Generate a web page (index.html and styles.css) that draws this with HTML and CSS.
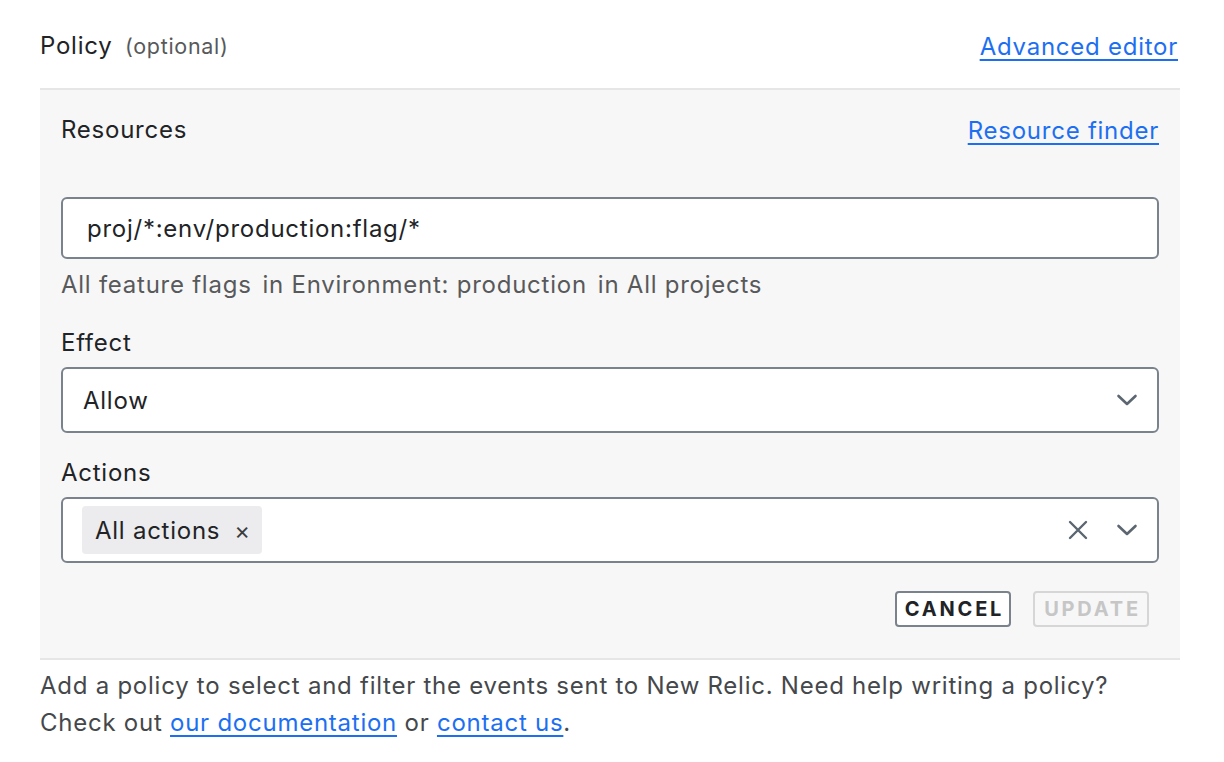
FILE: index.html
```html
<!DOCTYPE html>
<html lang="en">
<head>
<meta charset="utf-8">
<title>Policy</title>
<link rel="stylesheet" href="styles.css">
</head>
<body>
<div class="wrap">
  <div class="head">
    <div class="title">Policy <span class="opt">(optional)</span></div>
    <a class="link" href="#">Advanced editor</a>
  </div>
  <div class="panel">
    <div class="row">
      <span class="label">Resources</span>
      <a class="link" href="#">Resource finder</a>
    </div>
    <div class="input">proj/*:env/production:flag/*</div>
    <div class="hint"><span>All feature flags</span><span>in Environment: production</span><span>in All projects</span></div>
    <div class="label field-label">Effect</div>
    <div class="select">
      <span class="val">Allow</span>
      <svg class="chev" width="22" height="14" viewBox="0 0 22 14"><path d="M2.5 3 L11 11 L19.5 3" fill="none" stroke="#5b6670" stroke-width="2.6" stroke-linecap="round" stroke-linejoin="round"/></svg>
    </div>
    <div class="label field-label">Actions</div>
    <div class="select multi">
      <span class="chip">All actions <span class="chip-x">×</span></span>
      <span class="spacer"></span>
      <svg class="clear" width="20" height="20" viewBox="0 0 20 20"><path d="M2 2 L18 18 M18 2 L2 18" fill="none" stroke="#5b6670" stroke-width="2.4" stroke-linecap="round"/></svg>
      <svg class="chev" width="22" height="14" viewBox="0 0 22 14"><path d="M2.5 3 L11 11 L19.5 3" fill="none" stroke="#5b6670" stroke-width="2.6" stroke-linecap="round" stroke-linejoin="round"/></svg>
    </div>
    <div class="actions">
      <button class="btn">CANCEL</button>
      <button class="btn disabled">UPDATE</button>
    </div>
  </div>
  <p class="desc">Add a policy to select and filter the events sent to New Relic. Need help writing a policy?<br>Check out <a class="link" href="#">our documentation</a> or <a class="link" href="#">contact us</a>.</p>
</div>
</body>
</html>
```

FILE: styles.css
```css
* { box-sizing: border-box; }
html, body { margin: 0; padding: 0; background: #ffffff; }
body {
  font-family: Inter, "Noto Sans", "Liberation Sans", sans-serif;
  color: #212326;
  font-size: 24px;
  letter-spacing: 0.75px;
}
.wrap {
  width: 1140px;
  margin-left: 40px;
}
.head {
  height: 88px;
  display: flex;
  justify-content: space-between;
  align-items: center;
  padding-top: 4px;
}
.title { font-size: 24px; line-height: 36px; }
.opt { font-size: 21.5px; color: #58595b; margin-left: 5px; letter-spacing: 0.7px; }
.link {
  color: #1d6ff2;
  text-decoration: underline;
  text-underline-offset: 4px;
  text-decoration-thickness: 2px;
}
.head .link { margin-right: 2px; }
.panel {
  background: #f7f7f7;
  border-top: 2px solid #e6e6e6;
  border-bottom: 2px solid #e6e6e6;
  padding: 22px 21px 31px 21px;
}
.row {
  display: flex;
  justify-content: space-between;
  align-items: center;
  height: 36px;
}
.label { line-height: 36px; }
.input {
  margin-top: 49px;
  height: 62px;
  background: #fff;
  border: 2px solid #7a838d;
  border-radius: 6px;
  display: flex;
  align-items: center;
  padding-left: 24px;
}
.hint {
  margin-top: 8px;
  line-height: 36px;
  color: #58595b;
  display: flex;
  gap: 11px;
}
.field-label { margin-top: 22px; }
.select {
  margin-top: 6px;
  height: 66px;
  background: #fff;
  border: 2px solid #7a838d;
  border-radius: 6px;
  display: flex;
  align-items: center;
  padding: 0 19px 0 20px;
}
.select .val { flex: 1; }
.multi { padding-left: 19px; }
.chip {
  height: 48px;
  background: #ececee;
  border-radius: 4px;
  display: flex;
  align-items: center;
  padding: 0 11px 0 13px;
}
.chip-x { margin-left: 14px; font-size: 24px; color: #3a3d40; }
.spacer { flex: 1; }
.clear { margin-right: 28px; }
.chev { display: block; }
.actions {
  margin-top: 28px;
  display: flex;
  justify-content: flex-end;
  gap: 22px;
  padding-right: 10px;
}
.btn {
  width: 116px;
  height: 36px;
  background: #fff;
  border: 2px solid #7a838d;
  border-radius: 4px;
  font-family: Inter, "Noto Sans", "Liberation Sans", sans-serif;
  font-weight: 700;
  font-size: 20px;
  letter-spacing: 2.8px;
  color: #212326;
  padding: 0 0 0 3px;
  display: flex;
  align-items: center;
  justify-content: center;
}
.btn.disabled {
  border-color: #d6d6d6;
  color: #c6c6c6;
  background: transparent;
}
.desc {
  margin: 7px 0 0 0;
  line-height: 37px;
  color: #45484b;
}
```
